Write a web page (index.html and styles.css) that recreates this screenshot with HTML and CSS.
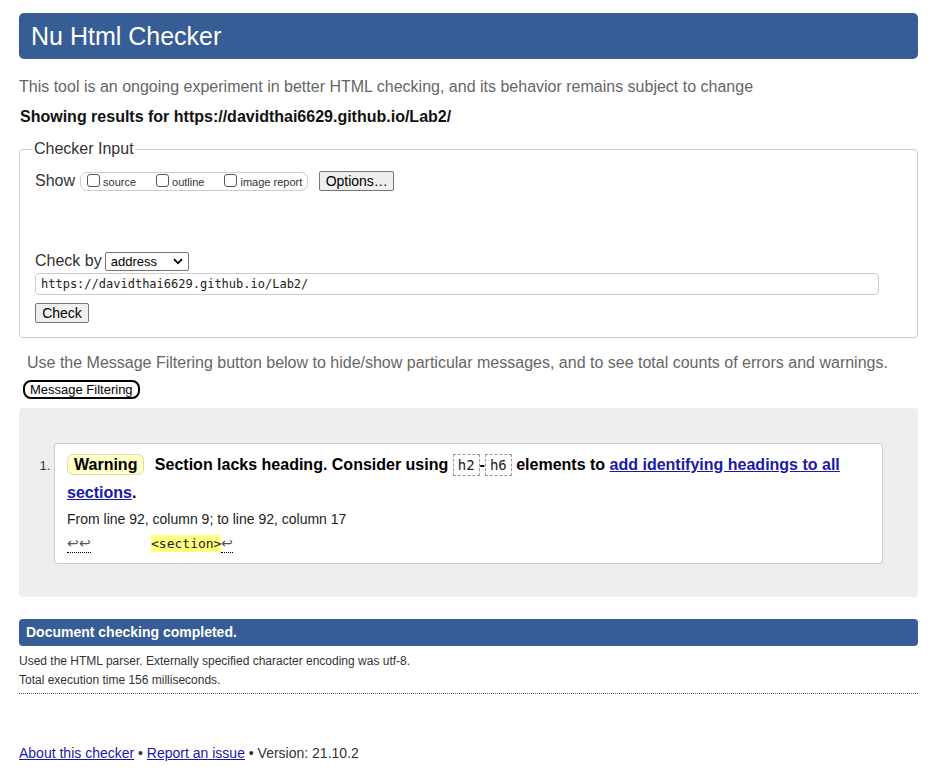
FILE: index.html
```html
<!DOCTYPE html>
<html>
<head>
<meta charset="utf-8">
<title>Nu Html Checker</title>
<link rel="stylesheet" href="styles.css">
</head>
<body>
<h1 class="banner">Nu Html Checker</h1>
<p class="intro">This tool is an ongoing experiment in better HTML checking, and its behavior remains subject to change</p>
<p class="showing">Showing results for https://davidthai6629.github.io/Lab2/</p>
<fieldset class="input-box">
  <legend>Checker Input</legend>
  <div class="show-row">
    <span class="show-label">Show</span>
    <span class="show-group">
      <label class="opt"><span class="cb"></span>source</label>
      <label class="opt"><span class="cb"></span>outline</label>
      <label class="opt"><span class="cb"></span>image report</label>
    </span>
    <button class="btn options">Options…</button>
  </div>
  <div class="checkby-row">
    <span class="checkby-label">Check by</span>
    <span class="select">address<svg class="chev" width="10" height="7" viewBox="0 0 10 7"><path d="M1 1.2 L5 5.2 L9 1.2" fill="none" stroke="#000" stroke-width="1.8"/></svg></span>
  </div>
  <div class="url">https://davidthai6629.github.io/Lab2/</div>
  <button class="btn check">Check</button>
</fieldset>
<p class="filter-note">Use the Message Filtering button below to hide/show particular messages, and to see total counts of errors and warnings.</p>
<button class="filter-btn">Message Filtering</button>
<div class="results">
  <ol class="msgs">
    <li class="msg">
      <p class="msg-text"><span class="badge">Warning</span> <span class="msg-body">Section lacks heading. Consider using <code class="tag">h2</code>-<code class="tag">h6</code> elements to <a href="#" class="msg-link">add identifying headings to all sections</a>.</span></p>
      <p class="location">From line 92, column 9; to line 92, column 17</p>
      <p class="extract"><span class="lf">↩↩</span><span class="gap"></span><span class="hl">&lt;section&gt;</span><span class="lf">↩</span></p>
    </li>
  </ol>
</div>
<div class="done">Document checking completed.</div>
<div class="details">
  <p class="detail">Used the HTML parser. Externally specified character encoding was utf-8.</p>
  <p class="detail">Total execution time 156 milliseconds.</p>
</div>
<div class="rule"></div>
<p class="footer"><a href="#">About this checker</a> • <a href="#">Report an issue</a> • Version: 21.10.2</p>
</body>
</html>
```
FILE: styles.css
```css
body {
  margin: 0;
  padding: 13px 24px 0 19px;
  font-family: "Liberation Sans", Arial, sans-serif;
  color: #222;
  background: #fff;
}
.banner {
  margin: 0;
  height: 46px;
  line-height: 46px;
  padding: 0 12px;
  background: #365d95;
  color: #fff;
  font-size: 25px;
  font-weight: normal;
  border-radius: 5px;
}
.intro {
  margin: 18px 0 0 0;
  font-size: 16px;
  line-height: 20px;
  color: #666;
}
.showing {
  margin: 10px 0 0 1px;
  font-size: 16px;
  line-height: 20px;
  font-weight: bold;
  color: #111;
}
.input-box {
  margin: 13px 0 0 0;
  padding: 11px 15px 14px 15px;
  border: 1px solid #ccc;
  border-radius: 4px;
}
.input-box legend {
  padding: 0 1px;
  margin-left: -2px;
  font-size: 16px;
  color: #333;
}
.show-row {
  display: flex;
  align-items: center;
  height: 24px;
}
.show-label {
  font-size: 16px;
  color: #333;
  margin-right: 5px;
}
.show-group {
  display: inline-flex;
  align-items: center;
  height: 17px;
  padding: 0 5px 0 6px;
  border: 1px solid #ccc;
  border-radius: 7px;
  gap: 20px;
}
.opt {
  display: inline-flex;
  align-items: flex-end;
  font-size: 11px;
  color: #333;
}
.cb {
  display: inline-block;
  width: 11px;
  height: 11px;
  border: 1px solid #555;
  border-radius: 3px;
  margin-right: 3px;
  margin-bottom: 1px;
  background: #fff;
}
.btn {
  font-family: "Liberation Sans", Arial, sans-serif;
  font-size: 13px;
  color: #000;
  background: #efefef;
  border: 1px solid #767676;
  border-radius: 2px;
  padding: 1px 6px;
  height: 20px;
}
.options {
  margin-left: 11px;
  width: 75px;
  font-size: 14px;
  padding: 0 4px;
}
.checkby-row {
  display: flex;
  align-items: center;
  margin-top: 58px;
  height: 20px;
}
.checkby-label {
  font-size: 16px;
  color: #333;
  margin-right: 3px;
}
.select {
  display: inline-flex;
  align-items: center;
  justify-content: space-between;
  width: 72px;
  height: 17px;
  padding: 0 5px;
  border: 1px solid #767676;
  border-radius: 2px;
  font-size: 13px;
  color: #000;
}
.chev { margin-top: 1px; }
.url {
  margin-top: 2px;
  width: 832px;
  height: 20px;
  line-height: 20px;
  padding: 0 5px;
  border: 1px solid #ccc;
  border-radius: 4px;
  font-family: "DejaVu Sans Mono", Consolas, monospace;
  font-size: 12px;
  color: #222;
}
.check {
  margin-top: 8px;
  width: 54px;
  height: 20px;
  font-size: 14px;
  padding: 0 4px;
}
.filter-note {
  margin: 15px 0 0 8px;
  font-size: 16px;
  line-height: 20px;
  color: #666;
}
.filter-btn {
  display: block;
  margin: 7px 0 0 4px;
  height: 19px;
  padding: 0 5px;
  border: 2px solid #000;
  border-radius: 8px;
  background: #fff;
  font-family: "Liberation Sans", Arial, sans-serif;
  font-size: 13px;
  color: #000;
  line-height: 14px;
}
.results {
  margin-top: 9px;
  background: #eee;
  border-radius: 4px;
  padding: 35px 35px 33px 0;
}
.msgs {
  margin: 0;
  padding-left: 35px;
}
.msg {
  background: #fff;
  border: 1px solid #ccc;
  border-radius: 3px;
  padding: 7px 12px 10px 12px;
  font-size: 13px;
  color: #333;
}
.msg::marker { color: #333; }
.msg-text {
  margin: 0;
  font-size: 16px;
  line-height: 28px;
  font-weight: bold;
  color: #000;
}
.badge {
  display: inline-block;
  padding: 0 6px;
  line-height: 19px;
  background: #ffffc8;
  border: 1px solid #e0e0a0;
  border-radius: 6px;
  margin-right: 6px;
}
.tag {
  font-family: "DejaVu Sans Mono", Consolas, monospace;
  font-weight: normal;
  font-size: 14px;
  padding: 2px 4px;
  border: 1px dashed #999;
  color: #222;
}
.msg-link { color: #1a1aa6; }
.location {
  margin: 4px 0 0 0;
  font-size: 14px;
  line-height: 17px;
  color: #222;
}
.extract {
  margin: 7px 0 0 0;
  font-family: "DejaVu Sans Mono", Consolas, monospace;
  font-size: 13px;
  line-height: 17px;
  color: #222;
  display: flex;
  align-items: baseline;
}
.lf {
  color: #555;
  border-bottom: 1px dotted #000;
  font-size: 14px;
  font-family: "DejaVu Sans", sans-serif;
  font-weight: 300;
}
.gap { display: inline-block; width: 60px; }
.hl { background: #ffff80; color: #222; }
.done {
  margin-top: 22px;
  height: 27px;
  line-height: 27px;
  padding: 0 7px;
  background: #365d95;
  color: #fff;
  font-size: 14px;
  font-weight: bold;
  border-radius: 4px;
}
.details {
  display: flex;
  flex-direction: column;
  gap: 5px;
  padding-top: 8px;
}
.detail {
  margin: 0;
  font-size: 12px;
  line-height: 14px;
  color: #333;
}
.rule {
  margin-top: 6px;
  border-top: 1px dotted #555;
}
.footer {
  margin: 51px 0 0 0;
  font-size: 14px;
  line-height: 17px;
  color: #333;
}
.footer a { color: #1a1aa6; }
```
